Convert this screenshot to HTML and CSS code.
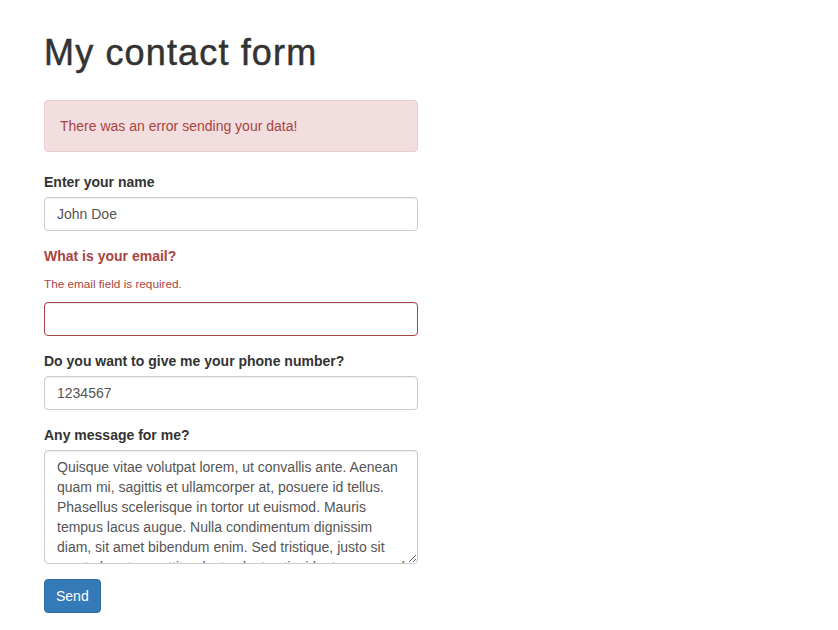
FILE: index.html
```html
<!DOCTYPE html>
<html lang="en">
<head>
<meta charset="utf-8">
<title>My contact form</title>
<link rel="stylesheet" href="styles.css">
</head>
<body>
<div class="container">
  <h1 class="title">My contact form</h1>
  <div class="alert">There was an error sending your data!</div>
  <form class="form">
    <div class="form-group">
      <label class="label" for="name">Enter your name</label>
      <input class="control" id="name" type="text" value="John Doe">
    </div>
    <div class="form-group has-error">
      <label class="label" for="email">What is your email?</label>
      <span class="help-block">The email field is required.</span>
      <input class="control" id="email" type="email" value="">
    </div>
    <div class="form-group">
      <label class="label" for="phone">Do you want to give me your phone number?</label>
      <input class="control" id="phone" type="text" value="1234567">
    </div>
    <div class="form-group">
      <label class="label" for="message">Any message for me?</label>
      <textarea class="control area" id="message" rows="5">Quisque vitae volutpat lorem, ut convallis ante. Aenean
quam mi, sagittis et ullamcorper at, posuere id tellus.
Phasellus scelerisque in tortor ut euismod. Mauris
tempus lacus augue. Nulla condimentum dignissim
diam, sit amet bibendum enim. Sed tristique, justo sit
amet pharetra porttitor, lectus lectus tincidunt purus, sed
ultrices lorem magna vel nisl.</textarea>
    </div>
    <button class="btn" type="button">Send</button>
  </form>
</div>
</body>
</html>
```

FILE: styles.css
```css
html, body {
  margin: 0;
  padding: 0;
  background: #fff;
}

body {
  font-family: "Liberation Sans", Arial, Helvetica, sans-serif;
  font-size: 14px;
  line-height: 20px;
  color: #333;
}

.container {
  width: 374px;
  padding-left: 44px;
}

.title {
  font-size: 36px;
  font-weight: 500;
  line-height: 40px;
  margin: 33px 0 27px;
  letter-spacing: 1.15px;
  -webkit-text-stroke: 0.5px #333;
}

.alert {
  padding: 15px;
  border: 1px solid #ebccd1;
  border-radius: 4px;
  background: #f2dede;
  color: #a94442;
  margin-bottom: 20px;
}

.form {
  margin: 0;
}

.form-group {
  margin-bottom: 15px;
}

.label {
  display: block;
  font-weight: 700;
  margin-bottom: 5px;
}

.help-block {
  display: block;
  font-size: 11.75px;
  line-height: 17px;
  margin: 9px 0 10px;
  color: #a94442;
}

.control {
  display: block;
  box-sizing: border-box;
  width: 100%;
  height: 34px;
  padding: 6px 12px;
  font-family: inherit;
  font-size: 14px;
  line-height: 20px;
  color: #555;
  background: #fff;
  border: 1px solid #ccc;
  border-radius: 4px;
  box-shadow: inset 0 1px 1px rgba(0, 0, 0, 0.075);
  margin: 0;
  outline: none;
}

.has-error .label {
  color: #a94442;
}

.has-error .control {
  border-color: #a94442;
}

.area {
  height: 114px;
  resize: vertical;
  white-space: pre;
  overflow: hidden;
}

.btn {
  display: inline-block;
  height: 34px;
  padding: 6px 11px;
  font-family: inherit;
  font-size: 14px;
  line-height: 20px;
  color: #fff;
  background: #337ab7;
  border: 1px solid #2e6da4;
  border-radius: 4px;
  cursor: pointer;
}
```
